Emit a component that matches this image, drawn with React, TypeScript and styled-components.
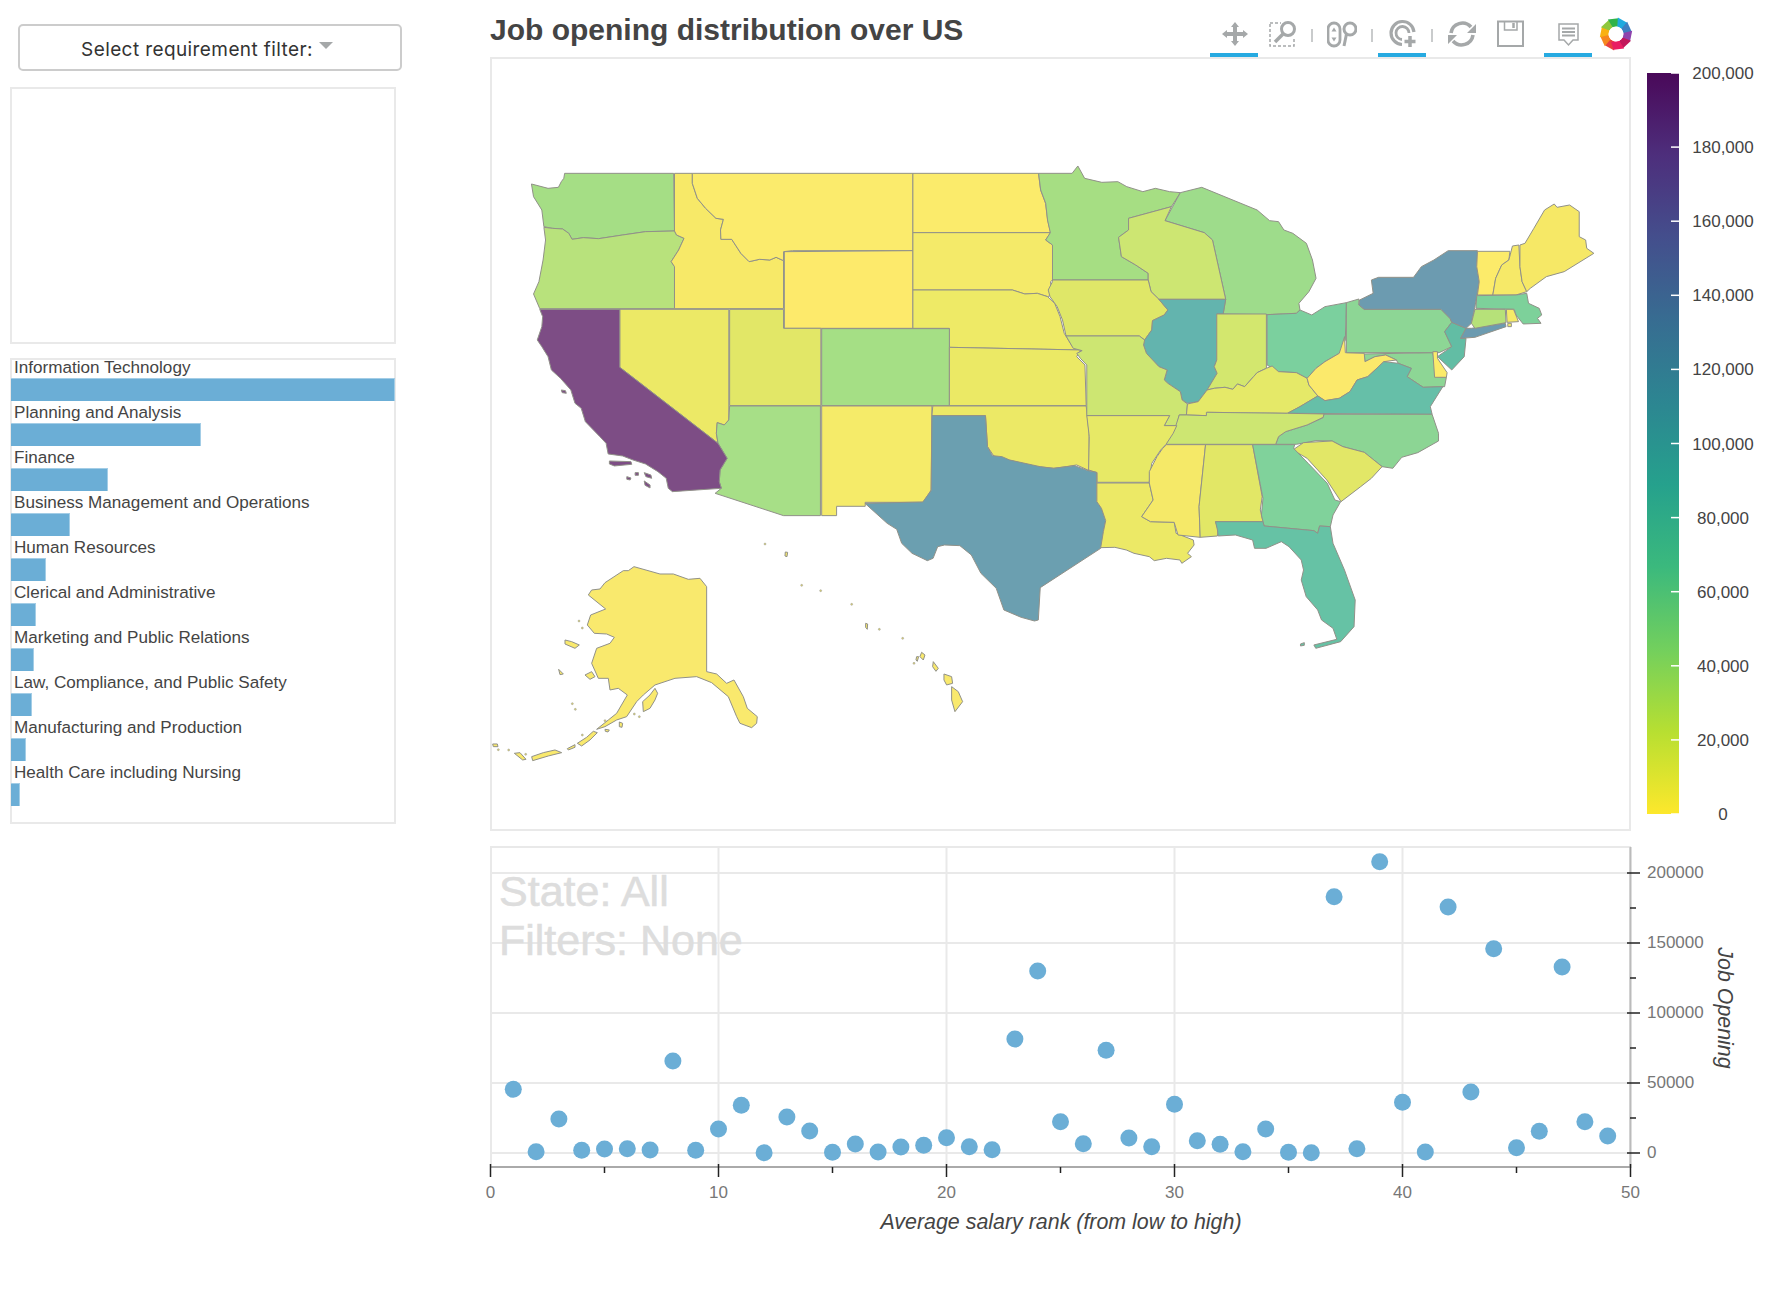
import { createGlobalStyle, styled } from "styled-components";

const GlobalStyle = createGlobalStyle`
  html, body {
    margin: 0;
    background: #fff;
    font-family: "Liberation Sans", Arial, sans-serif;
  }
`;

const Page = styled.div`
  display: flex;
  width: 1788px;
  height: 1308px;
  overflow: hidden;
`;

const Sidebar = styled.aside`
  width: 490px;
  flex: none;
  padding: 24px 0 0 10px;
  box-sizing: border-box;
`;

const DropdownButton = styled.button`
  display: block;
  width: 384px;
  height: 47px;
  margin-left: 8px;
  padding: 3px 6px 0 0;
  background: #fff;
  border: 2px solid #ccc;
  border-radius: 5px;
  color: #333;
  font-family: "Inter", sans-serif;
  font-size: 19px;
  letter-spacing: 0.4px;
`;

const Caret = styled.span`
  display: inline-block;
  width: 0;
  height: 0;
  margin-left: 6px;
  vertical-align: 7px;
  border-top: 7px solid #a5a8a9;
  border-left: 7px solid transparent;
  border-right: 7px solid transparent;
`;

const SideBox = styled.div<{ $height: number; $top: number }>`
  width: 386px;
  height: ${(p) => p.$height}px;
  margin-top: ${(p) => p.$top}px;
  box-sizing: border-box;
  border: 2px solid #e9e9e9;
`;

const BarList = styled.ul`
  list-style: none;
  margin: -4px -2px 0 -1px;
  padding: 0;
`;

const BarRow = styled.li`
  height: 45px;
`;

const BarLabel = styled.div`
  height: 22px;
  padding-left: 3px;
  color: #444;
  font-size: 17.1px;
  line-height: 24px;
  white-space: nowrap;
`;

const Bar = styled.div`
  height: 23px;
  background: #6baed6;
  box-shadow: inset -1px 1px 0 #a3cde6;
`;

const Main = styled.main`
  flex: 1;
  min-width: 0;
`;

const Header = styled.header`
  display: flex;
  justify-content: space-between;
  align-items: flex-end;
  width: 1150px;
  height: 57px;
`;

const Title = styled.h1`
  margin: 0 0 8px;
  color: #444;
  font-size: 30px;
  font-weight: 700;
  line-height: 38px;
`;

const Toolbar = styled.div`
  display: flex;
  align-items: stretch;
  height: 57px;
`;

const ToolButton = styled.div<{ $active?: boolean; $gap?: boolean }>`
  display: flex;
  align-items: flex-start;
  justify-content: center;
  width: 48px;
  padding-top: 19px;
  margin-left: ${(p) => (p.$gap ? "10px" : "0")};
  box-sizing: border-box;
  border-bottom: 4px solid ${(p) => (p.$active ? "#26aae1" : "transparent")};
`;

const ToolDivider = styled.div`
  width: 2px;
  height: 13px;
  margin: 29px 5px 0;
  background: #c9cbcc;
`;

const LogoMark = styled.svg`
  margin-top: -2px;
`;

const MapRow = styled.div`
  display: flex;
`;

const MapPanel = styled.div`
  width: 1141px;
  height: 774px;
  box-sizing: border-box;
  border: 2px solid #e9e9e9;
`;

const Figure = styled.svg<{ $top?: number }>`
  display: block;
  overflow: visible;
  margin-top: ${(p) => p.$top ?? 0}px;
`;

const ColorbarWrap = styled.div`
  width: 157px;
  height: 774px;
`;

const TickLabel = styled.text<{ $size?: number; $color?: string }>`
  font-family: "Liberation Sans", Arial, sans-serif;
  font-size: ${(p) => p.$size ?? 17}px;
  fill: ${(p) => p.$color ?? "#777"};
`;

const AxisTitle = styled.text`
  font-family: "Liberation Sans", Arial, sans-serif;
  font-size: 21.4px;
  font-style: italic;
  fill: #444;
`;

const Watermark = styled.text`
  font-family: "Liberation Sans", Arial, sans-serif;
  font-size: 43px;
  fill: #ddd;
  stroke: #ddd;
  stroke-width: 0.6px;
`;

const requirements = [
  { name: "Information Technology", width: 384 },
  { name: "Planning and Analysis", width: 190 },
  { name: "Finance", width: 97 },
  { name: "Business Management and Operations", width: 59 },
  { name: "Human Resources", width: 35 },
  { name: "Clerical and Administrative", width: 25 },
  { name: "Marketing and Public Relations", width: 23 },
  { name: "Law, Compliance, and Public Safety", width: 21 },
  { name: "Manufacturing and Production", width: 15 },
  { name: "Health Care including Nursing", width: 9 },
];

// job openings per salary rank, index 0 is rank 1
const openings = [
  45500, 900, 24300, 1900, 2900, 3100, 2100, 65700, 1900, 17100, 34100, 200, 25700, 15700, 500, 6400, 700, 4300, 5500,
  10900, 4500, 2400, 81400, 130000, 22400, 6600, 73400, 10700, 4500, 34800, 8800, 6200, 900, 17100, 500, 200, 183100,
  3100, 208100, 36200, 700, 175700, 43600, 145900, 3800, 15500, 132900, 22400, 12100,
];

const viridis = ["#fde725", "#b5de2b", "#6ece58", "#35b779", "#1f9e89", "#26828e", "#31688e", "#3e4989", "#482878", "#440154"];

interface Region {
  fill: string;
  d: string;
}

// state outlines are traced per crop, each group has its own offset and scale
const westStates: Region[] = [
  { fill: "#a5de85", d: "M180,70 443,70 445,243 375,245 320,255 262,266 225,263 198,268 190,250 175,237 150,235 130,230 125,180 105,140 100,102 140,115 165,112 172,95 178,85Z" },
  { fill: "#b8e27c", d: "M130,232 150,235 175,237 190,250 198,268 225,263 262,266 320,255 375,245 445,243 450,255 468,265 455,300 437,335 445,350 445,476 120,476 105,432 118,395 128,330 134,270Z" },
  { fill: "#ece966", d: "M313,478 576,478 576,810 565,825 548,818 546,850 550,880 313,652Z" },
  { fill: "#f7e968", d: "M445,70 488,70 488,100 500,145 520,175 545,205 563,208 556,240 557,268 583,268 605,310 625,335 650,328 675,330 690,322 708,332 708,476 445,476 445,350 437,335 455,300 468,265 450,255 445,243Z" },
  { fill: "#fbeb6c", d: "M488,70 1020,70 1020,302 730,302 708,305 708,332 690,322 675,330 650,328 625,335 605,310 583,268 557,268 556,240 563,208 545,205 520,175 500,145 488,100Z" },
  { fill: "#fdea6b", d: "M710,305 1020,302 1020,535 710,535Z" },
  { fill: "#fbeb6b", d: "M1020,70 1323,70 1328,120 1340,160 1345,210 1352,248 1020,248Z" },
  { fill: "#f4ea69", d: "M1020,248 1352,248 1340,270 1357,285 1357,390 1352,395 1355,435 1345,440 1320,430 1290,432 1260,420 1020,420Z" },
  { fill: "#eeea66", d: "M1020,420 1260,420 1290,432 1320,430 1345,440 1362,460 1375,500 1385,550 1405,590 1425,600 1108,592 1108,535 1020,535Z" },
  { fill: "#a5df85", d: "M800,536 1108,536 1108,767 800,767Z" },
  { fill: "#ebe965", d: "M1108,592 1425,600 1415,620 1435,645 1438,767 1108,767Z" },
  { fill: "#e2e767", d: "M578,478 708,478 708,535 798,535 798,767 578,767Z" },
  { fill: "#a7df87", d: "M578,768 797,768 797,1097 708,1097 543,1030 558,1015 553,995 555,960 572,925 550,880 546,850 548,818 565,825 576,810Z" },
  { fill: "#f5eb69", d: "M800,768 1066,768 1064,1020 1045,1057 905,1057 905,1069 836,1069 836,1097 800,1097Z" },
  { fill: "#ece966", d: "M1068,768 1438,768 1445,850 1445,962 1415,945 1390,950 1360,955 1320,950 1250,930 1215,918 1200,890 1195,797 1066,797Z" },
];

const california: Region[] = [
  { fill: "#7d4d85", d: "M120,478 313,478 313,652 550,880 572,925 555,960 553,995 558,1015 440,1025 430,1015 425,985 405,965 375,942 345,930 320,918 285,912 280,880 265,860 230,815 220,775 205,760 195,720 170,685 148,660 140,620 125,590 114,570 125,530 127,500Z" },
  { fill: "#7d4d85", d: "M172,720 182,722 184,730 174,728Z" },
  { fill: "#7d4d85", d: "M288,933 340,935 342,943 300,948 288,942Z" },
  { fill: "#7d4d85", d: "M372,968 388,975 390,985 376,980Z" },
  { fill: "#7d4d85", d: "M330,980 340,984 338,990 330,988Z" },
  { fill: "#7d4d85", d: "M372,993 386,1005 386,1014 374,1006Z" },
  { fill: "#7d4d85", d: "M350,968 358,968 358,976 350,976Z" },
];

const southStates: Region[] = [
  { fill: "#6b9fb0", d: "M397,47 537,47 542,140 555,167 580,170 600,180 680,200 715,205 770,197 805,212 827,217 828,305 840,325 851,362 845,395 843,430 838,445 680,563 675,660 665,663 630,652 585,630 565,565 525,520 500,465 470,437 430,435 412,440 400,475 385,482 345,460 318,430 305,388 280,370 222,310 373,306 395,272Z" },
  { fill: "#ece966", d: "M828,249 965,249 975,300 945,350 968,365 1030,367 1035,400 1080,420 1082,435 1065,460 1075,470 1050,490 1045,480 1010,475 978,482 965,470 925,460 905,450 875,442 838,443 845,395 851,362 840,325 828,305Z" },
  { fill: "#f5e968", d: "M1010,134 1112,134 1095,320 1098,412 1040,405 1030,367 968,365 945,350 975,300 965,249 965,215 985,170 1000,145Z" },
  { fill: "#e2e766", d: "M1112,134 1235,134 1260,290 1255,330 1262,365 1138,365 1145,390 1143,408 1098,412 1095,320Z" },
  { fill: "#80d29b", d: "M1235,134 1345,134 1342,145 1380,190 1430,250 1450,300 1465,305 1445,345 1438,380 1410,378 1405,400 1395,392 1265,378 1258,345 1262,295Z" },
  { fill: "#66c2a5", d: "M1138,365 1262,365 1265,378 1395,392 1405,400 1410,378 1438,380 1445,430 1475,510 1503,600 1500,680 1465,725 1400,745 1395,735 1455,718 1445,685 1415,660 1405,630 1375,590 1362,540 1368,510 1362,480 1330,440 1310,425 1270,445 1240,445 1235,420 1190,405 1145,408 1143,390Z" },
  { fill: "#66c2a5", d: "M1360,732 1370,728 1370,736 1360,738Z" },
];

const eastStates: Region[] = [
  { fill: "#a6de83", d: "M-32,70 62,70 78,48 97,85 145,97 190,95 215,110 260,125 295,115 335,125 365,128 340,170 220,205 220,240 192,262 200,320 240,345 275,370 275,390 7,390 7,285 -12,270 1,248 -7,210 -12,160 -26,120Z" },
  { fill: "#9edc8b", d: "M365,128 425,112 580,180 615,212 640,215 655,240 680,250 718,280 735,330 745,385 725,425 697,460 700,480 690,490 608,494 467,492 485,490 492,448 455,270 432,248 322,212Z" },
  { fill: "#cde672", d: "M340,170 322,212 432,248 455,270 492,448 305,448 283,425 275,390 275,370 240,345 200,320 192,262 220,240 220,205Z" },
  { fill: "#dfe768", d: "M7,390 275,390 283,425 305,448 330,480 320,495 287,512 285,540 265,570 250,558 45,558 35,510 20,470 0,440 -5,420 7,395Z" },
  { fill: "#63b4ae", d: "M305,448 492,448 485,492 467,492 467,630 460,650 468,670 440,720 415,755 385,760 370,750 365,725 330,700 320,690 328,660 305,650 270,610 262,585 265,570 285,540 287,512 320,495 330,480Z" },
  { fill: "#cde672", d: "M45,558 250,558 265,570 262,585 270,610 305,650 328,660 320,690 330,700 365,725 370,750 385,762 382,795 362,795 355,827 320,827 335,797 103,797 103,645 85,625 75,610 90,602 65,595Z" },
  { fill: "#d3e76e", d: "M467,492 606,492 606,655 580,668 570,680 545,710 525,702 512,718 490,712 460,715 440,720 468,670 460,650 467,630Z" },
  { fill: "#7bd09e", d: "M608,494 690,490 700,480 733,495 770,470 830,458 827,570 810,610 770,635 745,655 720,685 690,668 640,665 608,645Z" },
  { fill: "#e5e968", d: "M385,762 415,755 440,720 460,715 490,712 512,718 525,702 545,710 570,680 580,668 606,655 622,648 640,665 690,668 720,685 725,705 750,738 700,770 665,790 440,787 438,797 382,795Z" },
  { fill: "#8dd695", d: "M880,612 1072,608 1085,680 1110,682 1105,710 1045,712 1000,680 1012,655 975,640 970,630 940,615 910,620 882,635Z" },
  { fill: "#fbe96b", d: "M825,560 827,608 880,610 882,635 910,620 940,615 970,630 935,635 890,680 860,690 840,725 810,745 770,752 750,738 725,705 720,685 745,655 770,635 810,610Z" },
  { fill: "#8dd695", d: "M830,458 865,447 865,465 880,478 1095,478 1120,505 1125,517 1105,545 1125,590 1090,608 830,608Z" },
  { fill: "#62bda4", d: "M1125,517 1165,535 1150,565 1165,565 1160,620 1125,660 1085,620 1125,590 1105,545Z" },
  { fill: "#6c9bb0", d: "M867,450 905,430 900,390 920,382 1018,382 1040,350 1075,330 1115,302 1197,302 1195,350 1202,395 1190,470 1180,520 1165,535 1125,517 1120,505 1095,478 880,478 865,465Z" },
  { fill: "#6c9bb0", d: "M1150,565 1165,535 1180,535 1275,520 1277,530 1190,562Z" },
  { fill: "#fceb6a", d: "M1197,304 1288,304 1285,330 1265,345 1248,385 1240,435 1197,435 1202,395 1195,350Z" },
  { fill: "#f6e968", d: "M1295,288 1313,285 1316,350 1322,395 1335,425 1305,435 1240,435 1248,385 1265,345 1285,330Z" },
  { fill: "#f6e866", d: "M1316,285 1330,280 1355,235 1385,180 1412,162 1420,172 1455,165 1482,185 1482,260 1500,270 1503,295 1523,310 1440,365 1390,380 1345,415 1335,425 1322,395 1316,350Z" },
  { fill: "#7dd19a", d: "M1195,437 1305,435 1335,430 1340,460 1370,475 1377,495 1365,505 1375,520 1325,522 1305,495 1300,478 1193,475Z" },
  { fill: "#b6e179", d: "M1190,478 1275,478 1277,518 1190,535 1180,520Z" },
  { fill: "#f5ea68", d: "M1278,478 1298,478 1312,515 1280,517Z" },
  { fill: "#f5ea68", d: "M1282,520 1292,520 1292,530 1282,530Z" },
  { fill: "#fbeb6a", d: "M1072,605 1085,605 1085,625 1112,668 1110,682 1077,682Z" },
  { fill: "#66bfa8", d: "M665,790 700,770 750,738 770,752 810,745 840,725 860,690 890,680 935,635 975,640 1012,655 1000,680 1045,712 1100,710 1065,770 1070,793Z" },
  { fill: "#8cd594", d: "M767,793 1070,793 1088,850 1088,873 1030,908 985,922 960,955 930,950 880,907 820,890 790,873 745,872 690,883 632,883 640,860 660,845 720,825 765,803Z" },
  { fill: "#cde672", d: "M438,787 665,790 767,792 765,802 720,825 660,845 640,860 632,883 325,883 335,860 350,835 362,795 382,795 438,797Z" },
  { fill: "#e7e966", d: "M103,797 335,797 320,827 355,827 345,850 325,883 310,900 285,940 280,975 278,997 132,997 132,968 108,960 110,860Z" },
  { fill: "#e2e767", d: "M680,900 710,878 790,873 820,890 880,907 930,950 900,985 870,1010 815,1055 775,990 720,925Z" },
];

const alaskaHawaii: Region[] = [
  { fill: "#f9e96d", d: "M462,140 540,162 580,162 625,178 660,175 680,200 680,455 710,462 740,490 762,480 790,530 802,565 832,590 830,610 815,623 780,610 770,590 745,530 695,488 650,470 585,475 525,495 490,525 470,545 440,590 410,600 375,620 350,628 385,600 410,580 442,525 415,505 390,510 385,475 355,475 335,430 350,385 390,370 403,352 380,342 343,340 322,315 332,285 377,267 325,225 335,210 360,207 375,188 430,152 445,152Z" },
  { fill: "#f9e96d", d: "M525,505 533,520 525,540 510,565 490,575 488,545 510,525Z" },
  { fill: "#f9e96d", d: "M255,360 275,365 298,375 285,385 255,372Z" },
  { fill: "#f9e96d", d: "M315,465 335,455 345,470 330,478Z" },
  { fill: "#f9e96d", d: "M236,448 250,462 240,464Z" },
  { fill: "#f9e96d", d: "M292,670 320,652 340,634 352,638 330,660 305,678Z" },
  { fill: "#f9e96d", d: "M155,710 190,698 225,690 245,698 205,708 158,722Z" },
  { fill: "#f9e96d", d: "M103,700 120,698 138,718 128,720Z" },
  { fill: "#f9e96d", d: "M38,672 52,672 54,680 40,680Z" },
  { fill: "#f9e96d", d: "M262,686 285,674 285,682 265,690Z" },
  { fill: "#f9e96d", d: "M418,606 428,610 426,622 418,620Z" },
  { fill: "#f9e96d", d: "M375,628 388,630 384,636 376,634Z" },
  { fill: "#f9e96d", d: "M1415,500 1435,515 1448,545 1425,575 1415,540Z" },
  { fill: "#f9e96d", d: "M1392,462 1415,470 1418,490 1400,495 1392,480Z" },
  { fill: "#f9e96d", d: "M1360,425 1375,445 1368,454 1358,440Z" },
  { fill: "#f9e96d", d: "M1325,397 1335,405 1330,420 1320,410Z" },
  { fill: "#f9e96d", d: "M1310,410 1316,410 1312,424 1308,420Z" },
  { fill: "#f9e96d", d: "M1157,310 1163,312 1162,328 1157,322Z" },
  { fill: "#f9e96d", d: "M916,96 923,97 921,110 915,108Z" },
];

const tinyIslands = [
  [855, 72], [965, 196], [1022, 212], [1115, 253], [1198, 328], [1268, 355], [1302, 430], [297, 303], [307, 324],
  [277, 551], [286, 568], [463, 582], [478, 590], [375, 602], [307, 645], [86, 690], [137, 703], [55, 689],
];

function StateGroup({ regions, transform }: { regions: Region[]; transform: string }) {
  return (
    <g transform={transform}>
      {regions.map((r, i) => (
        <path key={i} d={r.d} fill={r.fill} stroke="#919189" strokeWidth={1} strokeLinejoin="round" vectorEffect="non-scaling-stroke" />
      ))}
    </g>
  );
}

function UsMap() {
  return (
    <Figure width={1137} height={770} viewBox="492 59 1137 770">
      <StateGroup regions={westStates} transform="translate(490 150) scale(0.4146 0.3333)" />
      <StateGroup regions={eastStates} transform="translate(1050 150) scale(0.3571 0.3333)" />
      <StateGroup regions={southStates} transform="translate(780 400) scale(0.3827 0.3333)" />
      <StateGroup regions={california} transform="translate(490 150) scale(0.4146 0.3333)" />
      <StateGroup regions={alaskaHawaii} transform="translate(480 520) scale(0.3333 0.3333)" />
      {tinyIslands.map(([x, y], i) => (
        <circle key={i} cx={480 + x / 3} cy={520 + y / 3} r={1} fill="#d8cf6e" stroke="#999" strokeWidth={0.5} />
      ))}
    </Figure>
  );
}

function Colorbar() {
  const ticks = Array.from({ length: 11 }, (_, i) => i * 20000);
  const top = 16;
  const step = 74.1;
  return (
    <ColorbarWrap>
      <Figure width={157} height={774}>
        <defs>
          <linearGradient id="viridis" x1="0" y1="1" x2="0" y2="0">
            {viridis.map((c, i) => (
              <stop key={c} offset={i / (viridis.length - 1)} stopColor={c} stopOpacity={0.97} />
            ))}
          </linearGradient>
        </defs>
        <rect x={16} y={top} width={32} height={741} fill="url(#viridis)" />
        {ticks.map((t, i) => {
          const y = top + (10 - i) * step;
          return (
            <g key={t}>
              <line x1={40} x2={48} y1={y} y2={y} stroke="#fff" strokeWidth={1.5} />
              <TickLabel x={92} y={y + 6} textAnchor="middle" $color="#444">
                {t.toLocaleString("en-US")}
              </TickLabel>
            </g>
          );
        })}
      </Figure>
    </ColorbarWrap>
  );
}

function Scatter() {
  const toX = (v: number) => 490.5 + v * 22.8;
  const toY = (v: number) => 1153 - (v / 50000) * 70;
  const xTicks = [0, 5, 10, 15, 20, 25, 30, 35, 40, 45, 50];
  const yTicks = [0, 25000, 50000, 75000, 100000, 125000, 150000, 175000, 200000];
  return (
    <Figure $top={15} width={1298} height={420} viewBox="490 846 1298 420">
      <rect x={491} y={847} width={1139} height={320} fill="none" stroke="#e9e9e9" strokeWidth={2} />
      {[10, 20, 30, 40].map((t) => (
        <line key={t} x1={toX(t)} x2={toX(t)} y1={847} y2={1167} stroke="#e9e9e9" strokeWidth={2} />
      ))}
      {[0, 50000, 100000, 150000, 200000].map((t) => (
        <line key={t} x1={491} x2={1630} y1={toY(t)} y2={toY(t)} stroke="#e9e9e9" strokeWidth={2} />
      ))}
      <Watermark x={499} y={906}>State: All</Watermark>
      <Watermark x={499} y={955}>Filters: None</Watermark>
      <line x1={490} x2={1631} y1={1167} y2={1167} stroke="#aaa" strokeWidth={2} />
      <line x1={1630.5} x2={1630.5} y1={847} y2={1168} stroke="#bbb" strokeWidth={2} />
      {xTicks.map((t) => (
        <g key={t}>
          <line x1={toX(t)} x2={toX(t)} y1={t % 10 === 0 ? 1164 : 1167} y2={t % 10 === 0 ? 1177 : 1173} stroke="#222" strokeWidth={1.5} />
          {t % 10 === 0 && (
            <TickLabel x={toX(t)} y={1198} textAnchor="middle">
              {t}
            </TickLabel>
          )}
        </g>
      ))}
      {yTicks.map((t) => (
        <g key={t}>
          <line x1={t % 50000 === 0 ? 1627 : 1630} x2={t % 50000 === 0 ? 1640 : 1636} y1={toY(t)} y2={toY(t)} stroke="#222" strokeWidth={1.5} />
          {t % 50000 === 0 && (
            <TickLabel x={1647} y={toY(t) + 5}>
              {t}
            </TickLabel>
          )}
        </g>
      ))}
      {openings.map((v, i) => (
        <circle key={i} cx={toX(i + 1)} cy={toY(v)} r={8.5} fill="#6baed6" />
      ))}
      <AxisTitle x={1061} y={1229} textAnchor="middle">
        Average salary rank (from low to high)
      </AxisTitle>
      <AxisTitle x={1718} y={1008} textAnchor="middle" transform="rotate(90 1718 1008)">
        Job Opening
      </AxisTitle>
    </Figure>
  );
}

const iconProps = { width: 30, height: 30, viewBox: "0 0 30 30", fill: "none", stroke: "#a5a8a9" };

function PanIcon() {
  return (
    <svg {...iconProps}>
      <path d="M16 3 20 8H12Z M16 27 20 22H12Z M3 15 8 11V19Z M29 15 24 11V19Z" fill="#a5a8a9" stroke="none" />
      <path d="M16 7V23M7 15H25" strokeWidth={4} />
    </svg>
  );
}

function BoxZoomIcon() {
  return (
    <svg {...iconProps}>
      <path d="M3 4H27V27H3Z" strokeWidth={1.5} strokeDasharray="3 2" />
      <path d="M14 3H30V19H14Z" fill="#fff" stroke="none" />
      <circle cx={21} cy={10} r={6.5} strokeWidth={3} fill="#fff" />
      <path d="M16 15 8 23" strokeWidth={3.5} />
    </svg>
  );
}

function WheelZoomIcon() {
  return (
    <svg {...iconProps}>
      <rect x={1} y={4} width={12} height={23} rx={6} strokeWidth={2.8} />
      <path d="M7 8.5 9.5 12.5H4.5Z M7 22.5 9.5 18.5H4.5Z" fill="#a5a8a9" stroke="none" />
      <circle cx={23} cy={10} r={6} strokeWidth={3} />
      <path d="M19.5 15 17 27" strokeWidth={3} />
    </svg>
  );
}

function RoundZoomIcon() {
  return (
    <svg {...iconProps}>
      <path d="M27 13A11.5 11.5 0 1 0 15 25.5" strokeWidth={3.2} />
      <path d="M22 14A6.5 6.5 0 1 0 15 20.5" strokeWidth={2.8} />
      <path d="M23 17V28M17.5 22.5H28.5" strokeWidth={3.5} />
    </svg>
  );
}

function ResetIcon() {
  return (
    <svg {...iconProps} width={34}>
      <path d="M4 14A11.5 11.5 0 0 1 24 8" strokeWidth={3.6} />
      <path d="M26 16A11.5 11.5 0 0 1 6 22" strokeWidth={3.6} />
      <path d="M29 5V14H20Z M1 25V16H10Z" fill="#a5a8a9" stroke="none" />
    </svg>
  );
}

function SaveIcon() {
  return (
    <svg {...iconProps}>
      <path d="M3 2.5H28V27H3Z" strokeWidth={2} />
      <path d="M9.5 2.5V11H22V2.5" strokeWidth={1.5} />
      <path d="M18.5 4V9" strokeWidth={2.5} />
    </svg>
  );
}

function HoverIcon() {
  return (
    <svg {...iconProps}>
      <path d="M6 5H25V21H20L15.5 26 11 21H6Z" strokeWidth={1.5} />
      <path d="M9 9.5H22M9 13H22M9 16.5H22" strokeWidth={1.8} />
    </svg>
  );
}

function BokehLogo() {
  const wedges = ["#e8403f", "#f6871f", "#f9b112", "#8fc73e", "#2fb34a", "#1faadf", "#3f7fc1", "#8e44ad", "#c2185b", "#e91e63"];
  return (
    <LogoMark width={34} height={34} viewBox="-17 -17 34 34">
      {wedges.map((c, i) => (
        <path key={c} d="M-1 -16.5 L9 -13 L8 -5 L0 -7.5 Z" fill={c} transform={`rotate(${i * 36 + 190})`} />
      ))}
      <circle r={7.5} fill="#fff" />
    </LogoMark>
  );
}

function App() {
  return (
    <Page>
      <GlobalStyle />
      <Sidebar>
        <DropdownButton>
          Select requirement filter:
          <Caret />
        </DropdownButton>
        <SideBox $height={257} $top={16} />
        <SideBox $height={466} $top={14}>
          <BarList>
            {requirements.map((r) => (
              <BarRow key={r.name}>
                <BarLabel>{r.name}</BarLabel>
                <Bar style={{ width: r.width }} />
              </BarRow>
            ))}
          </BarList>
        </SideBox>
      </Sidebar>
      <Main>
        <Header>
          <Title>Job opening distribution over US</Title>
          <Toolbar>
            <ToolButton $active><PanIcon /></ToolButton>
            <ToolButton><BoxZoomIcon /></ToolButton>
            <ToolDivider />
            <ToolButton><WheelZoomIcon /></ToolButton>
            <ToolDivider />
            <ToolButton $active><RoundZoomIcon /></ToolButton>
            <ToolDivider />
            <ToolButton><ResetIcon /></ToolButton>
            <ToolButton><SaveIcon /></ToolButton>
            <ToolButton $active $gap><HoverIcon /></ToolButton>
            <ToolButton><BokehLogo /></ToolButton>
          </Toolbar>
        </Header>
        <MapRow>
          <MapPanel>
            <UsMap />
          </MapPanel>
          <Colorbar />
        </MapRow>
        <Scatter />
      </Main>
    </Page>
  );
}

export default App;
